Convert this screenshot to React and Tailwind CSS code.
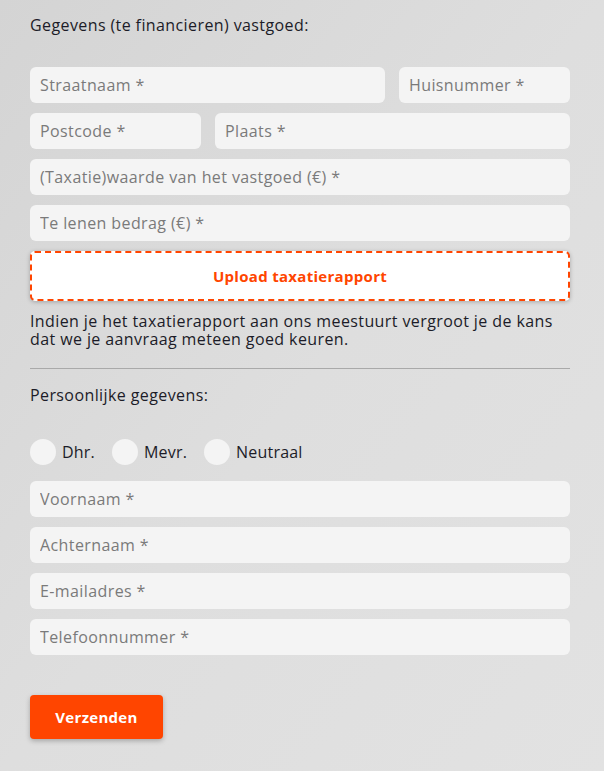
import { useState } from 'react'

const field = 'h-9 w-full rounded-md bg-[#f4f4f4] px-[10px] text-[16px] tracking-[0.4px] text-[#222] placeholder:text-[#7a7a7a] outline-none'

function Input({ placeholder, className = '' }) {
  return <input type="text" placeholder={placeholder} className={`${field} ${className}`} />
}

export default function App() {
  const [aanhef, setAanhef] = useState('')

  return (
    <div
      className="min-h-[771px] w-full bg-gradient-to-br from-[#d4d4d4] via-[#dedede] to-[#e2e2e2] pl-[30px] pr-[34px] pt-[14px] pb-8 tracking-[0.4px] text-[#1c1c28]"
      style={{ fontFamily: '"Open Sans", "Liberation Sans", sans-serif' }}
    >
      <p className="text-[16px] leading-[22px]">Gegevens (te financieren) vastgoed:</p>

      <div className="mt-[31px] flex flex-col gap-[10px]">
        <div className="grid grid-cols-[355px_1fr] gap-[14px]">
          <Input placeholder="Straatnaam *" />
          <Input placeholder="Huisnummer *" />
        </div>
        <div className="grid grid-cols-[171px_1fr] gap-[14px]">
          <Input placeholder="Postcode *" />
          <Input placeholder="Plaats *" />
        </div>
        <Input placeholder="(Taxatie)waarde van het vastgoed (€) *" />
        <Input placeholder="Te lenen bedrag (€) *" />

        <button className="flex h-[50px] w-full items-center justify-center rounded-[5px] border-2 border-dashed border-[#ff4500] bg-white text-[15px] font-bold tracking-[0.3px] text-[#ff4500] shadow-[0_1px_4px_rgba(0,0,0,0.25)]">
          Upload taxatierapport
        </button>
      </div>

      <p className="mt-[11px] text-[16px] leading-[18px]">
        Indien je het taxatierapport aan ons meestuurt vergroot je de kans dat we je aanvraag meteen goed keuren.
      </p>

      <hr className="mt-[20px] border-t border-[#a9a9a9]" />

      <p className="mt-[15px] text-[16px] leading-[22px]">Persoonlijke gegevens:</p>

      <div className="mt-[33px] flex items-center gap-[17px]">
        {['Dhr.', 'Mevr.', 'Neutraal'].map(label => (
          <label key={label} className="flex cursor-pointer items-center gap-[6px] text-[16px] tracking-[0.2px]">
            <span
              onClick={() => setAanhef(label)}
              className="flex h-[26px] w-[26px] items-center justify-center rounded-full bg-[#f4f4f4]"
            >
              {aanhef === label && <span className="h-3 w-3 rounded-full bg-[#ff4500]" />}
            </span>
            {label}
          </label>
        ))}
      </div>

      <div className="mt-[16px] flex flex-col gap-[10px]">
        <Input placeholder="Voornaam *" />
        <Input placeholder="Achternaam *" />
        <Input placeholder="E-mailadres *" />
        <Input placeholder="Telefoonnummer *" />
      </div>

      <button className="mt-[40px] h-[44px] w-[133px] rounded-[4px] bg-[#ff4500] text-[15px] font-bold tracking-[0.3px] text-white shadow-[0_2px_5px_rgba(0,0,0,0.25)]">
        Verzenden
      </button>
    </div>
  )
}
